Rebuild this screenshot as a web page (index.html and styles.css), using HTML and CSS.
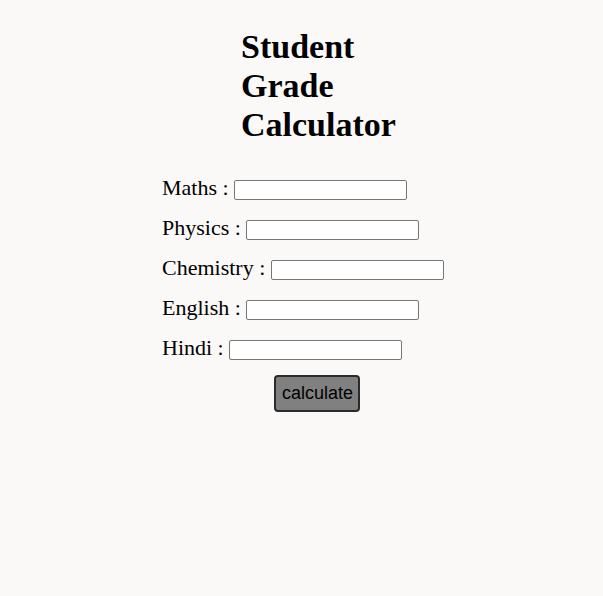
FILE: index.html
```html
<!DOCTYPE html>
<html>
<head>
<meta charset="utf-8">
<link rel="stylesheet" href="styles.css">
</head>
<body>
<div class="page">
  <h1 class="title">Student Grade Calculator</h1>
  <form class="form">
    <div class="row"><label>Maths : </label><input type="text" class="field"></div>
    <div class="row"><label>Physics : </label><input type="text" class="field"></div>
    <div class="row"><label>Chemistry : </label><input type="text" class="field"></div>
    <div class="row"><label>English : </label><input type="text" class="field"></div>
    <div class="row"><label>Hindi : </label><input type="text" class="field"></div>
    <div class="actions"><button type="button" class="btn">calculate</button></div>
  </form>
</div>
</body>
</html>
```
FILE: styles.css
```css
html, body {
  margin: 0;
  padding: 0;
  background: #faf9f8;
}
body {
  font-family: "Liberation Serif", "Times New Roman", serif;
  color: #000;
}
.page {
  width: 281px;
  margin: 0 0 0 162px;
  padding-top: 27px;
}
.title {
  font-size: 34px;
  font-weight: bold;
  width: 170px;
  margin: 0 0 31px 79px;
  line-height: 39px;
}
.form {
  margin: 0;
}
.row {
  font-size: 22px;
  line-height: 26px;
  margin-bottom: 14px;
  white-space: nowrap;
}
.field {
  font-family: Arial, "Liberation Sans", sans-serif;
  font-size: 13.33px;
  width: 173px;
  height: 20px;
  box-sizing: border-box;
  border: 1px solid #767676;
  border-radius: 2px;
  background: #fff;
  padding: 1px 2px;
  margin: 0;
  vertical-align: 1px;
}
.actions {
  padding-left: 112px;
  margin-top: 0;
}
.btn {
  font-family: "Liberation Sans", Arial, sans-serif;
  font-size: 18px;
  color: #000;
  background: #808080;
  border: 2px solid #2b2b2b;
  border-radius: 4px;
  padding: 6px 6px;
  line-height: 21px;
  height: 37px;
  width: 86px;
  box-sizing: border-box;
}
```
